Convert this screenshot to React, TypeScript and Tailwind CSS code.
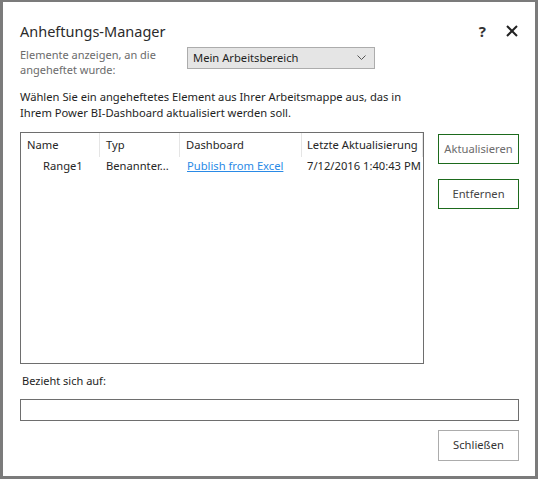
import React from 'react';

const font = { fontFamily: '"Noto Sans", "Open Sans", sans-serif' };

export default function App() {
  return (
    <div
      className="w-[538px] h-[479px] bg-white border-[#7b7b7b] border-t-2 border-l-[3px] border-r-[3px] border-b-[3px] flex flex-col pl-[17px] pr-[16px] text-[#262626]"
      style={font}
    >
      {/* Titel */}
      <div className="flex items-center h-[24px] mt-[17px]">
        <div className="text-[14.5px] leading-[24px] text-[#2b2b2b] flex-1">Anheftungs-Manager</div>
        <div className="text-[15px] font-bold text-[#333] mr-[20px] leading-none">?</div>
        <svg width="12" height="12" viewBox="0 0 12 12" className="mr-[1px]">
          <path d="M1 1 L11 11 M11 1 L1 11" stroke="#222" strokeWidth="2" />
        </svg>
      </div>

      <div className="flex mt-[4px]">
        <div className="w-[167px] text-[11px] leading-[15px] text-[#6b6b6b]">
          Elemente anzeigen, an die
          <br />
          angeheftet wurde:
        </div>
        <div className="w-[188px] h-[22px] bg-[#e5e5e5] border border-[#acacac] flex items-center pl-[5px] pr-[8px]">
          <span className="flex-1 text-[11.2px] text-[#1e1e1e]">Mein Arbeitsbereich</span>
          <svg width="9" height="6" viewBox="0 0 9 6">
            <path d="M0.5 0.5 L4.5 4.5 L8.5 0.5" stroke="#555" strokeWidth="1" fill="none" />
          </svg>
        </div>
      </div>

      <p className="mt-[12px] text-[11.2px] leading-[16px] text-[#1e1e1e]">
        Wählen Sie ein angeheftetes Element aus Ihrer Arbeitsmappe aus, das in
        <br />
        Ihrem Power BI-Dashboard aktualisiert werden soll.
      </p>

      <div className="flex mt-[11px] gap-[14px]">
        <div className="w-[404px] h-[232px] border border-[#6e6e6e] text-[11.2px]">
          <div className="flex h-[24px] items-center">
            <div className="w-[79px] pl-[6px] h-full flex items-center border-r border-[#e5e5e5]">Name</div>
            <div className="w-[80px] pl-[6px] h-full flex items-center border-r border-[#e5e5e5]">Typ</div>
            <div className="w-[122px] pl-[6px] h-full flex items-center border-r border-[#e5e5e5]">Dashboard</div>
            <div className="w-[121px] pl-[5px] h-full flex items-center border-r border-[#e5e5e5] whitespace-nowrap">Letzte Aktualisierung</div>
          </div>
          <div className="flex h-[19px] items-center">
            <div className="w-[79px] pl-[22px]">Range1</div>
            <div className="w-[80px] pl-[6px]">Benannter...</div>
            <div className="w-[122px] pl-[7px]">
              <span className="text-[#2a8ae6] underline">Publish from Excel</span>
            </div>
            <div className="w-[121px] pl-[5px] whitespace-nowrap">7/12/2016 1:40:43 PM</div>
          </div>
        </div>

        <div className="flex flex-col w-[81px] mt-[2px] gap-[15px]">
          <button className="h-[30px] border border-[#1d6a1d] text-[11.2px] text-[#6b6b6b]">Aktualisieren</button>
          <button className="h-[30px] border border-[#1d6a1d] text-[11.2px] text-[#444]">Entfernen</button>
        </div>
      </div>

      <div className="mt-[9px] pl-[2px] text-[11px] leading-[16px] text-[#1e1e1e]">Bezieht sich auf:</div>

      <div className="mt-[10px] h-[22px] border border-[#6e6e6e]" />

      <div className="flex justify-end mt-[9px]">
        <button className="w-[81px] h-[31px] border border-[#acacac] text-[11.2px] text-[#333]">Schließen</button>
      </div>
    </div>
  );
}
